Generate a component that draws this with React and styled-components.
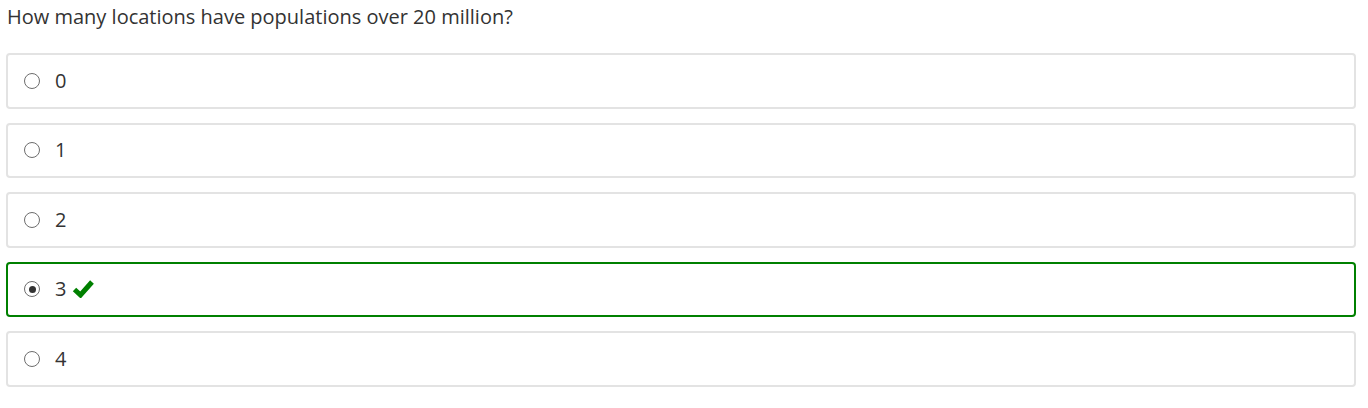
import React from 'react';
import styled, { createGlobalStyle } from 'styled-components';

const GlobalStyle = createGlobalStyle`
  body {
    margin: 0;
    background: #fff;
    font-family: "Open Sans", "Liberation Sans", sans-serif;
    color: #333;
  }
`;

const Wrapper = styled.div`
  padding: 0 12px 0 6px;
`;

const Question = styled.p`
  margin: 0;
  padding: 4px 1px 0;
  font-size: 20px;
  line-height: 26px;
  height: 49px;
`;

const OptionList = styled.ul`
  margin: 0;
  padding: 0;
  display: flex;
  flex-direction: column;
  gap: 14px;
`;

const Option = styled.li`
  list-style-type: none;
  box-sizing: border-box;
  height: 55.5px;
  display: flex;
  align-items: center;
  padding: 0 16px;
  border: 2px solid ${props => (props.correct ? '#008000' : '#e3e3e3')};
  border-radius: 4px;
`;

const Radio = styled.span`
  box-sizing: border-box;
  width: 16px;
  height: 16px;
  border-radius: 50%;
  border: 1.5px solid #6d6d6d;
  display: flex;
  align-items: center;
  justify-content: center;
  margin-right: 15px;

  &::after {
    content: '';
    width: 7px;
    height: 7px;
    border-radius: 50%;
    background: #333;
    display: ${props => (props.checked ? 'block' : 'none')};
  }
`;

const Label = styled.span`
  font-size: 20px;
  line-height: 26px;
`;

const TickSvg = styled.svg`
  width: 22px;
  height: 20px;
  margin-left: 6px;
  margin-top: -2px;
`;

const Tick = () => (
  <TickSvg viewBox="0 0 22 20">
    <path d="M2.5 11.5 L8.5 17 L20 4" fill="none" stroke="#008000" strokeWidth="5" />
  </TickSvg>
);

const options = ['0', '1', '2', '3', '4'];
const answer = '3';

export default function App() {
  return (
    <Wrapper>
      <GlobalStyle />
      <Question>How many locations have populations over 20 million?</Question>
      <OptionList>
        {options.map(opt => (
          <Option key={opt} correct={opt === answer}>
            <Radio checked={opt === answer} />
            <Label>{opt}</Label>
            {opt === answer && <Tick />}
          </Option>
        ))}
      </OptionList>
    </Wrapper>
  );
}
